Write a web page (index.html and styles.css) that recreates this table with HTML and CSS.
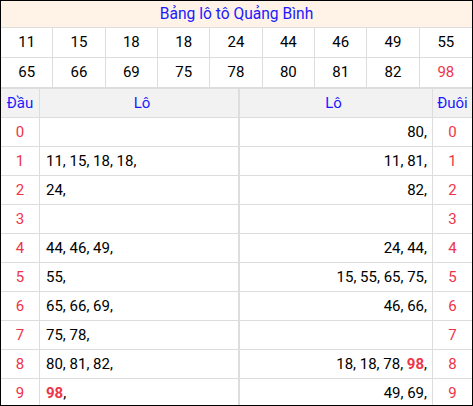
FILE: index.html
```html
<!DOCTYPE html>
<html lang="vi">
<head>
<meta charset="utf-8">
<link rel="stylesheet" href="styles.css">
</head>
<body>
<div class="frame">
  <div class="title">Bảng lô tô Quảng Bình</div>
  <div class="nums">
    <div class="n">11</div><div class="n">15</div><div class="n">18</div><div class="n">18</div><div class="n">24</div><div class="n">44</div><div class="n">46</div><div class="n">49</div><div class="n">55</div>
    <div class="n">65</div><div class="n">66</div><div class="n">69</div><div class="n">75</div><div class="n">78</div><div class="n">80</div><div class="n">81</div><div class="n">82</div><div class="n red">98</div>
  </div>
  <div class="lo">
    <div class="h d">Đầu</div><div class="h l">Lô</div><div class="h r">Lô</div><div class="h t">Đuôi</div>

    <div class="d">0</div><div class="l"></div><div class="r">80,</div><div class="t">0</div>
    <div class="d">1</div><div class="l">11, 15, 18, 18,</div><div class="r">11, 81,</div><div class="t">1</div>
    <div class="d">2</div><div class="l">24,</div><div class="r">82,</div><div class="t">2</div>
    <div class="d">3</div><div class="l"></div><div class="r"></div><div class="t">3</div>
    <div class="d">4</div><div class="l">44, 46, 49,</div><div class="r">24, 44,</div><div class="t">4</div>
    <div class="d">5</div><div class="l">55,</div><div class="r">15, 55, 65, 75,</div><div class="t">5</div>
    <div class="d">6</div><div class="l">65, 66, 69,</div><div class="r">46, 66,</div><div class="t">6</div>
    <div class="d">7</div><div class="l">75, 78,</div><div class="r"></div><div class="t">7</div>
    <div class="d">8</div><div class="l">80, 81, 82,</div><div class="r">18, 18, 78, <b class="hot">98</b>,</div><div class="t">8</div>
    <div class="d">9</div><div class="l"><b class="hot">98</b>,</div><div class="r">49, 69,</div><div class="t">9</div>
  </div>
</div>
</body>
</html>
```
FILE: styles.css
```css
* { box-sizing: border-box; }
html, body { margin: 0; padding: 0; background: #fff; }
body { font-family: Roboto, "Noto Sans", sans-serif; font-size: 15px; color: #000; }
.frame {
  width: 473px; height: 406px;
  border: 1px solid #000;
  overflow: hidden;
}
.title {
  height: 27px;
  background: #fff2e6;
  color: #1a1aff;
  text-align: center;
  line-height: 26px;
  border-bottom: 1px solid #ddd;
  font-size: 15.6px;
}
.nums {
  display: grid;
  grid-template-columns: repeat(9, 1fr);
}
.n {
  height: 30px;
  line-height: 29px;
  text-align: center;
  border-bottom: 1px solid #ddd;
  border-right: 1px solid #ddd;
}
.n:nth-child(9n) { border-right: none; }
.red { color: #ee3448; }
.lo {
  display: grid;
  grid-template-columns: 39px 200px 193px 1fr;
  grid-auto-rows: 29px;
  border-top: 1px solid #ddd;
}
.lo > div {
  border-bottom: 1px solid #ddd;
  line-height: 28px;
  white-space: nowrap;
}
.lo > .h {
  background: #f2f2f2;
  color: #1a1aff;
  text-align: center;
}
.d { border-right: 1px solid #ddd; text-align: center; color: #ee3448; }
.l { border-right: 2px solid #ddd; padding-left: 6px; }
.r { border-right: 1px solid #ddd; text-align: right; padding-right: 5px; }
.t { text-align: center; color: #ee3448; }
.hot { color: #ee3448; font-weight: 700; }
```
